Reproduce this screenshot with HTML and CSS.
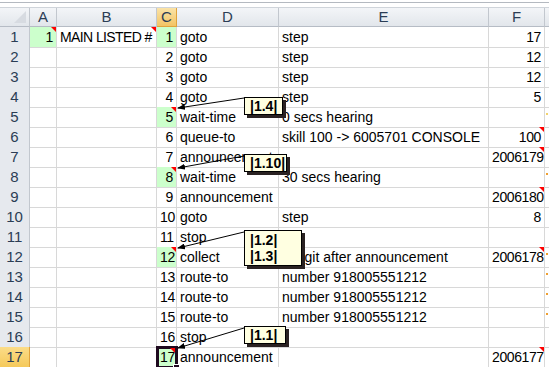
FILE: index.html
```html
<!DOCTYPE html>
<html lang="en">
<head>
    <meta charset="UTF-8">
    <title>Sheet1</title>
    <link rel="stylesheet" href="styles.css">
</head>
<body>
<div class="edge"></div>
<div class="sheet">
    <div class="row head">
        <div class="corner"></div><div>A</div><div>B</div><div class="sel">C</div><div>D</div><div>E</div><div>F</div><div></div>
    </div>
    <div class="row">
        <div class="rh">1</div><div class="num ok note">1</div><div class="note squeeze">MAIN LISTED #</div><div class="num ok">1</div><div>goto</div><div>step</div><div class="num">17</div><div></div>
    </div>
    <div class="row">
        <div class="rh">2</div><div></div><div></div><div class="num">2</div><div>goto</div><div>step</div><div class="num">12</div><div></div>
    </div>
    <div class="row">
        <div class="rh">3</div><div></div><div></div><div class="num">3</div><div>goto</div><div>step</div><div class="num">12</div><div></div>
    </div>
    <div class="row">
        <div class="rh">4</div><div></div><div></div><div class="num">4</div><div>goto</div><div>step</div><div class="num">5</div><div></div>
    </div>
    <div class="row">
        <div class="rh">5</div><div></div><div></div><div class="num ok note">5</div><div>wait-time</div><div>0 secs hearing</div><div class="num"></div><div class="mark pale"></div>
    </div>
    <div class="row">
        <div class="rh">6</div><div></div><div></div><div class="num">6</div><div>queue-to</div><div>skill 100 -&gt; 6005701 CONSOLE</div><div class="num note">100</div><div></div>
    </div>
    <div class="row">
        <div class="rh">7</div><div></div><div></div><div class="num">7</div><div>announcement</div><div></div><div class="num note">2006179</div><div></div>
    </div>
    <div class="row">
        <div class="rh">8</div><div></div><div></div><div class="num ok note">8</div><div>wait-time</div><div>30 secs hearing</div><div class="num"></div><div class="mark"></div>
    </div>
    <div class="row">
        <div class="rh">9</div><div></div><div></div><div class="num">9</div><div>announcement</div><div></div><div class="num note">2006180</div><div></div>
    </div>
    <div class="row">
        <div class="rh">10</div><div></div><div></div><div class="num">10</div><div>goto</div><div>step</div><div class="num">8</div><div></div>
    </div>
    <div class="row">
        <div class="rh">11</div><div></div><div></div><div class="num">11</div><div>stop</div><div></div><div class="num"></div><div></div>
    </div>
    <div class="row">
        <div class="rh">12</div><div></div><div></div><div class="num ok note">12</div><div>collect</div><div>5 digit after announcement</div><div class="num note">2006178</div><div class="mark"></div>
    </div>
    <div class="row">
        <div class="rh">13</div><div></div><div></div><div class="num">13</div><div>route-to</div><div>number 918005551212</div><div class="num"></div><div class="mark"></div>
    </div>
    <div class="row">
        <div class="rh">14</div><div></div><div></div><div class="num">14</div><div>route-to</div><div>number 918005551212</div><div class="num"></div><div class="mark"></div>
    </div>
    <div class="row">
        <div class="rh">15</div><div></div><div></div><div class="num">15</div><div>route-to</div><div>number 918005551212</div><div class="num"></div><div class="mark"></div>
    </div>
    <div class="row">
        <div class="rh">16</div><div></div><div></div><div class="num">16</div><div>stop</div><div></div><div class="num"></div><div></div>
    </div>
    <div class="row">
        <div class="rh sel">17</div><div></div><div></div><div class="num ok note active">17</div><div>announcement</div><div></div><div class="num note">2006177</div><div></div>
    </div>
</div>

<!-- comment callouts -->
<svg class="arrows" width="549" height="370">
    <defs>
        <marker id="head" markerWidth="8" markerHeight="6" refX="7" refY="3" orient="auto">
            <path d="M0,0 L8,3 L0,6 Z" fill="#000"/>
        </marker>
    </defs>
    <line x1="244" y1="98" x2="178" y2="108" stroke="#000" marker-end="url(#head)"/>
    <line x1="244" y1="156" x2="178" y2="168" stroke="#000" marker-end="url(#head)"/>
    <line x1="244" y1="232" x2="178" y2="248" stroke="#000" marker-end="url(#head)"/>
    <line x1="244" y1="328" x2="178" y2="348" stroke="#000" marker-end="url(#head)"/>
</svg>
<div class="tip tip-a">|1.4|</div>
<div class="tip tip-b">|1.10|</div>
<div class="tip tip-c">|1.2|<br>|1.3|</div>
<div class="tip tip-d">|1.1|</div>
</body>
</html>
```

FILE: styles.css
```css
body {
    margin: 0;
    font-family: 'Liberation Sans', Arial, sans-serif;
    font-size: 14px;
    color: #000;
    background: #fff;
    overflow: hidden;
}

.edge {
    height: 4px;
    margin-top: 2px;
    border-top: 1px solid #b4b9c0;
    border-bottom: 1px solid #cfd4da;
}

.row {
    display: grid;
    grid-template-columns: 30px 27px 100px 20px 102px 210px 56px 1fr;
    height: 20px;
}

.row > div {
    position: relative;
    box-sizing: border-box;
    border-right: 1px solid #d8d8d8;
    border-bottom: 1px solid #d8d8d8;
    padding: 0 3px;
    line-height: 20px;
    white-space: nowrap;
}

.head {
    height: 19px;
}

.head > div {
    background: linear-gradient(#f3f5f8, #e2e6eb);
    border-right-color: #c2c7ce !important;
    border-bottom-color: #b6bcc5 !important;
    color: #2b3d55;
    text-align: center;
    font-size: 15px;
    line-height: 18px;
}

.head .corner::after {
    content: '';
    position: absolute;
    right: 3px;
    bottom: 3px;
    border-left: 12px solid transparent;
    border-bottom: 12px solid #d7dbe1;
}

.head .sel {
    background: linear-gradient(#fae3a8, #f3c464);
    border-right-color: #e0a33c !important;
    border-bottom-color: #e0a33c !important;
}

.row .rh {
    background: #e6e9ee;
    border-right-color: #c2c7ce;
    border-bottom-color: #c9ced5;
    color: #2b3d55;
    text-align: center;
    font-size: 15px;
}

.row .rh.sel {
    background: linear-gradient(#fbdc88, #f5c95a);
    border-right-color: #e0a33c;
    border-bottom-color: #e0a33c;
}

.num {
    text-align: right;
    letter-spacing: -0.4px;
}

.ok {
    background: #ccffcc;
}

.squeeze {
    letter-spacing: -0.6px;
}

.note::after {
    content: '';
    position: absolute;
    top: 0;
    right: 0;
    border-left: 5px solid transparent;
    border-top: 5px solid #f00;
}

.active {
    outline: 3px solid #1f0a1f;
    outline-offset: -2px;
}

.active::before {
    content: '';
    position: absolute;
    right: -4px;
    bottom: -4px;
    width: 5px;
    height: 5px;
    background: #1f0a1f;
    border: 1px solid #fff;
    z-index: 2;
}

.active.note::after {
    top: 1px;
    right: 1px;
}

.mark::after {
    content: '';
    position: absolute;
    left: 1px;
    top: 6px;
    width: 2px;
    height: 2px;
    background: #f0a030;
}

.mark.pale::after {
    background: #f3d36c;
}

.arrows {
    position: absolute;
    left: 0;
    top: 0;
    pointer-events: none;
}

.tip {
    position: absolute;
    left: 244px;
    box-sizing: border-box;
    padding: 0 5px;
    background: #ffffe1;
    border: 1px solid #000;
    box-shadow: 3px 3px 0 #2a2222;
    font-weight: bold;
    font-size: 14px;
    line-height: 16px;
}

.tip-a {
    top: 97px;
    width: 39px;
}

.tip-b {
    top: 154px;
    width: 43px;
}

.tip-c {
    top: 230px;
    width: 58px;
    padding-top: 1px;
    padding-bottom: 1px;
}

.tip-d {
    top: 326px;
    width: 42px;
}
```
